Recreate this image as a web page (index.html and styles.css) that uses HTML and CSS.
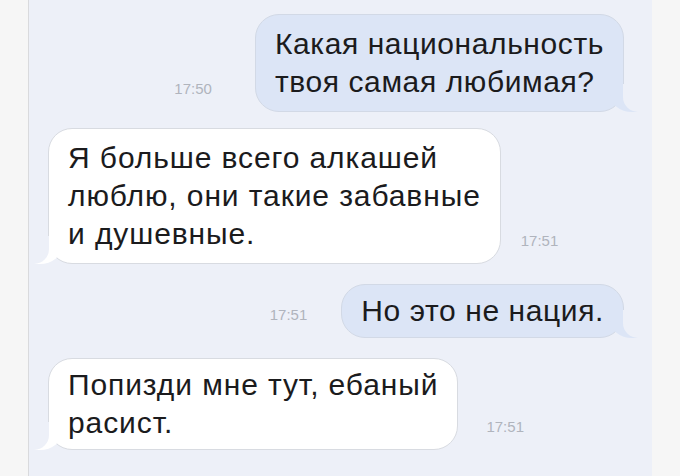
FILE: index.html
```html
<!DOCTYPE html>
<html lang="ru">
<head>
  <meta charset="UTF-8">
  <title>Чат</title>
  <link rel="stylesheet" href="styles.css">
</head>
<body>
  <div class="chat">
    <div class="row row-out first">
      <span class="time wide">17:50</span>
      <div class="bubble out">Какая национальность<br>твоя самая любимая?</div>
    </div>

    <div class="row row-in">
      <div class="bubble in">Я больше всего алкашей<br>люблю, они такие забавные<br>и душевные.</div>
      <span class="time">17:51</span>
    </div>

    <div class="row row-out">
      <span class="time">17:51</span>
      <div class="bubble out compact">Но это не нация.</div>
    </div>

    <div class="row row-in">
      <div class="bubble in compact">Попизди мне тут, ебаный<br>расист.</div>
      <span class="time wide">17:51</span>
    </div>
  </div>
</body>
</html>
```

FILE: styles.css
```css
body {
  margin: 0;
  padding: 0;
  background: #f6f6f6;
  font-family: 'Liberation Sans', Arial, sans-serif;
  color: #1b1b1d;
}

.chat {
  width: 624px;
  height: 476px;
  margin-left: 28px;
  border-left: 1px solid #d9dadd;
  background: #edf0f8;
  padding: 14px 28px 0 19px;
  box-sizing: border-box;
  display: flex;
  flex-direction: column;
  gap: 20px;
}

.row {
  display: flex;
  align-items: flex-end;
}

.row-out {
  justify-content: flex-end;
}

.row.first {
  margin-bottom: -4px;
}

.bubble {
  position: relative;
  font-size: 30px;
  letter-spacing: 0.6px;
  line-height: 38px;
  padding: 10px 19px;
  border-radius: 24px;
}

.bubble.compact {
  padding-top: 7px;
  padding-bottom: 7px;
}

.bubble.out {
  background: #dce5f6;
  border: 1px solid #d2d9e6;
}

.bubble.in {
  letter-spacing: 0.9px;
  background: #ffffff;
  border: 1px solid #d8dbe1;
}

/* tails */
.bubble.out::before {
  content: "";
  position: absolute;
  right: -15px;
  bottom: -1px;
  width: 28px;
  height: 26px;
  background: #dce5f6;
  border-bottom-left-radius: 22px 18px;
}

.bubble.out::after {
  content: "";
  position: absolute;
  right: -24px;
  bottom: -1px;
  width: 24px;
  height: 28px;
  background: #edf0f8;
  border-bottom-left-radius: 15px;
}

.bubble.in::before {
  content: "";
  position: absolute;
  left: -15px;
  bottom: -1px;
  width: 28px;
  height: 26px;
  background: #ffffff;
  border-bottom-right-radius: 22px 18px;
}

.bubble.in::after {
  content: "";
  position: absolute;
  left: -18px;
  bottom: -1px;
  width: 18px;
  height: 28px;
  background: #edf0f8;
  border-bottom-right-radius: 15px;
}

.time {
  font-family: 'Liberation Sans Narrow', 'Liberation Sans', sans-serif;
  font-size: 15px;
  color: #b0b4bd;
  padding-bottom: 15px;
}

.row-out .time {
  margin-right: 34px;
}

.row-out .time.wide {
  margin-right: 43px;
}

.row-in .time {
  margin-left: 20px;
}

.row-in .time.wide {
  margin-left: 28px;
}
```
